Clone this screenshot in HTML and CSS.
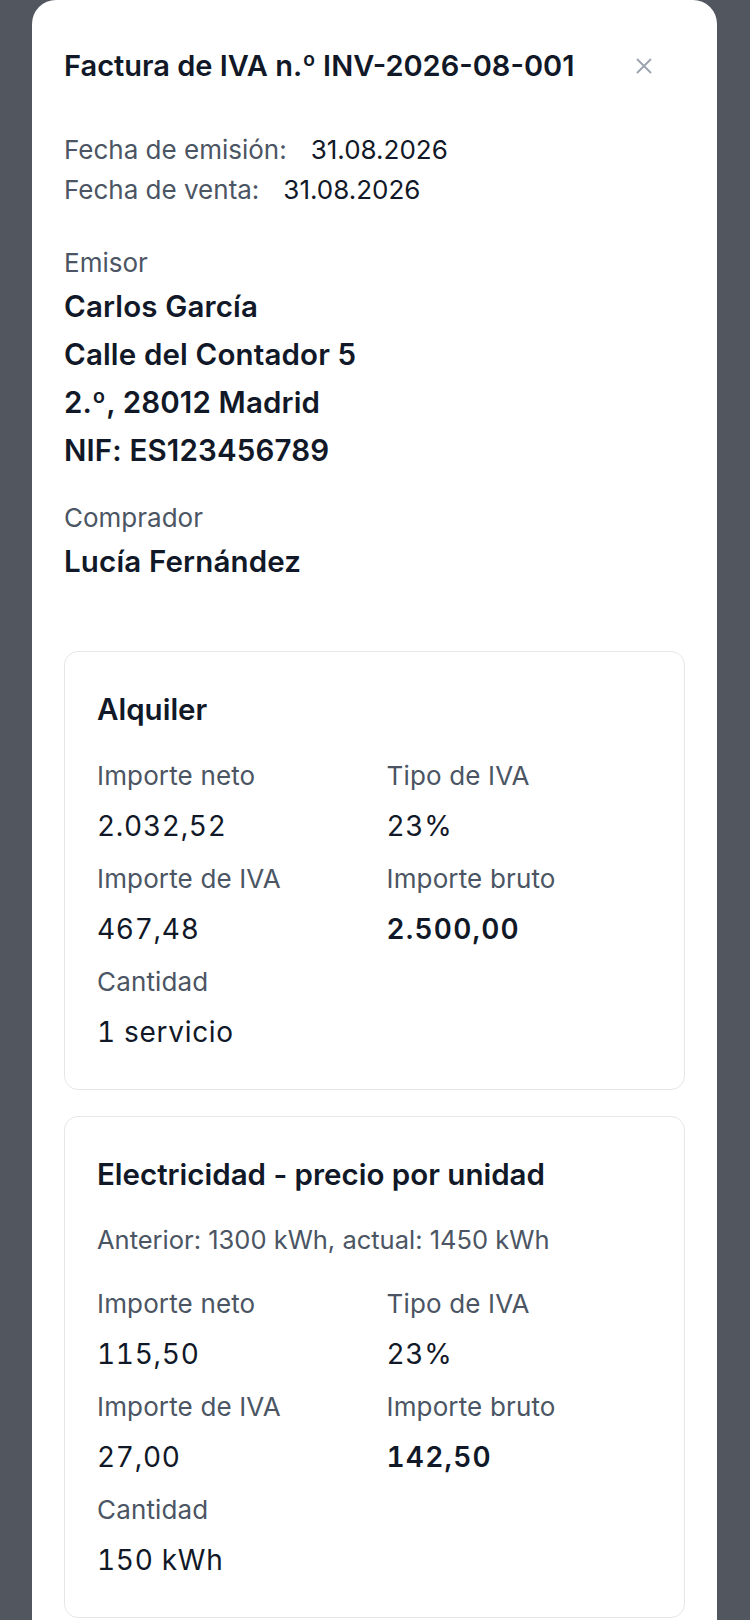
FILE: index.html
```html
<!DOCTYPE html>
<html lang="es">
<head>
<meta charset="utf-8">
<title>Factura de IVA</title>
<link rel="stylesheet" href="styles.css">
</head>
<body>
<div class="overlay">
  <section class="modal">
    <header class="modal-header">
      <h1 class="modal-title">Factura de IVA n.º INV-2026-08-001</h1>
      <button class="close-btn" aria-label="Cerrar">
        <svg width="16" height="16" viewBox="0 0 16 16" fill="none" stroke="#9ca3af" stroke-width="1.8" stroke-linecap="round"><path d="M1.5 1.5L14.5 14.5M14.5 1.5L1.5 14.5"/></svg>
      </button>
    </header>

    <div class="dates">
      <div class="date-row"><span class="date-label">Fecha de emisión:</span><span class="date-value">31.08.2026</span></div>
      <div class="date-row"><span class="date-label">Fecha de venta:</span><span class="date-value">31.08.2026</span></div>
    </div>

    <div class="party">
      <div class="party-label">Emisor</div>
      <div class="party-line">Carlos García</div>
      <div class="party-line">Calle del Contador 5</div>
      <div class="party-line">2.º, 28012 Madrid</div>
      <div class="party-line">NIF: ES123456789</div>
    </div>

    <div class="party party-buyer">
      <div class="party-label">Comprador</div>
      <div class="party-line">Lucía Fernández</div>
    </div>

    <div class="items">
      <article class="item-card">
        <h2 class="item-title">Alquiler</h2>
        <dl class="item-grid">
          <div class="field"><dt>Importe neto</dt><dd>2.032,52</dd></div>
          <div class="field"><dt>Tipo de IVA</dt><dd>23%</dd></div>
          <div class="field"><dt>Importe de IVA</dt><dd>467,48</dd></div>
          <div class="field"><dt>Importe bruto</dt><dd class="strong">2.500,00</dd></div>
          <div class="field"><dt>Cantidad</dt><dd>1 servicio</dd></div>
        </dl>
      </article>

      <article class="item-card">
        <h2 class="item-title">Electricidad - precio por unidad</h2>
        <p class="item-note">Anterior: 1300 kWh, actual: 1450 kWh</p>
        <dl class="item-grid">
          <div class="field"><dt>Importe neto</dt><dd>115,50</dd></div>
          <div class="field"><dt>Tipo de IVA</dt><dd>23%</dd></div>
          <div class="field"><dt>Importe de IVA</dt><dd>27,00</dd></div>
          <div class="field"><dt>Importe bruto</dt><dd class="strong">142,50</dd></div>
          <div class="field"><dt>Cantidad</dt><dd>150 kWh</dd></div>
        </dl>
      </article>
    </div>
  </section>
</div>
</body>
</html>
```

FILE: styles.css
```css
* { box-sizing: border-box; }

html, body {
  margin: 0;
  padding: 0;
}

body {
  background: #52565e;
  font-family: Inter, "Noto Sans", sans-serif;
  color: #111827;
  height: 1620px;
  overflow: hidden;
}

.overlay {
  padding: 0 33px 0 32px;
}

.modal {
  background: #ffffff;
  border-radius: 24px 24px 0 0;
  padding: 46px 32px 80px 32px;
  min-height: 1700px;
}

.modal-header {
  display: flex;
  align-items: center;
  justify-content: space-between;
}

.modal-title {
  margin: 0;
  font-size: 29px;
  line-height: 40px;
  font-weight: 600;
  color: #111827;
}

.close-btn {
  border: 0;
  background: none;
  padding: 0;
  margin-right: 33px;
  width: 16px;
  height: 16px;
  display: flex;
}

.dates {
  margin-top: 44px;
}

.date-row {
  font-size: 26px;
  line-height: 39.5px;
}

.date-label {
  color: #4b5563;
  margin-right: 24px;
}

.date-value {
  color: #111827;
}

.party {
  margin-top: 34px;
}

.party-buyer {
  margin-top: 24px;
}

.party-label {
  font-size: 26px;
  line-height: 39px;
  color: #4b5563;
}

.party-line {
  font-size: 29.5px;
  line-height: 48px;
  font-weight: 600;
  letter-spacing: 0.15px;
  color: #111827;
}

.items {
  margin-top: 66px;
  display: flex;
  flex-direction: column;
  gap: 26px;
}

.item-card {
  border: 1.5px solid #e5e7eb;
  border-radius: 14px;
  padding: 37px 32px 37px 32px;
}

.item-title {
  margin: 0;
  font-size: 29.5px;
  line-height: 40px;
  font-weight: 600;
  color: #111827;
}

.item-note {
  margin: 29px 0 0 0;
  font-size: 25.5px;
  line-height: 34px;
  color: #4b5563;
}

.item-grid {
  margin: 29px 0 0 0;
  display: grid;
  grid-template-columns: 1fr 1fr;
  column-gap: 24px;
  row-gap: 15px;
}

.field dt {
  font-size: 26px;
  line-height: 36px;
  letter-spacing: 0.15px;
  color: #4b5563;
}

.field dd {
  margin: 12px 0 0 0;
  font-size: 28px;
  line-height: 40px;
  letter-spacing: 0.7px;
  font-variant-numeric: tabular-nums;
  color: #111827;
}

.field dd.strong {
  font-weight: 600;
  letter-spacing: 1.2px;
}
```
